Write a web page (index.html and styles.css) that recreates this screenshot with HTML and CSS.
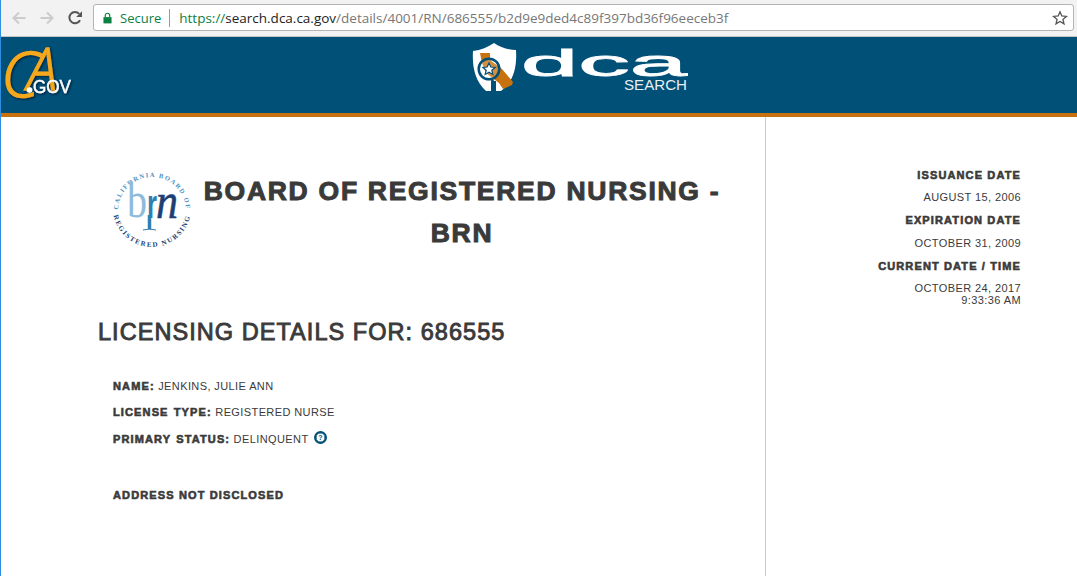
FILE: index.html
```html
<!DOCTYPE html>
<html lang="en">
<head>
<meta charset="utf-8">
<title>DCA Search</title>
<link rel="stylesheet" href="styles.css">
</head>
<body>
<div class="page">
  <div class="toolbar">
    <div class="nav">
      <svg class="nav-icon" viewBox="0 0 16 16"><path d="M14.5 8H2.500M8 2.500 2.500 8 8 13.500" fill="none" stroke="#ccc" stroke-width="2"/></svg>
      <svg class="nav-icon" viewBox="0 0 16 16"><path d="M1.500 8h12M8 2.500 13.500 8 8 13.500" fill="none" stroke="#ccc" stroke-width="2"/></svg>
      <svg class="nav-icon" viewBox="0 0 16 16"><path d="M13 10.200A5.600 5.600 0 1 1 12.200 3.900" fill="none" stroke="#555" stroke-width="2"/><path d="M9.200 7H15V1.200z" fill="#555"/></svg>
    </div>
    <div class="omnibox">
      <svg class="lock" viewBox="0 0 10 12"><path d="M0.500 5h9v7h-9z" fill="#0b8043"/><path d="M2.500 5V3.200a2.500 2.500 0 0 1 5 0V5" fill="none" stroke="#0b8043" stroke-width="1.300"/></svg>
      <span class="secure">Secure</span>
      <span class="url"><span class="scheme">https://</span><span class="host">search.dca.ca.gov</span>/details/4001/RN/686555/b2d9e9ded4c89f397bd36f96eeceb3f</span>
      <svg class="star" viewBox="0 0 16 16"><path d="M8 1.800 9.800 6l4.600.4-3.500 3 1.100 4.500L8 11.500l-4 2.400 1.100-4.500-3.500-3L6.200 6z" fill="none" stroke="#555" stroke-width="1.300"/></svg>
    </div>
  </div>

  <header class="banner">
    <svg class="ca-logo" viewBox="0 0 74 62">
      <defs>
        <filter id="ca-shadow" x="-10%" y="-10%" width="125%" height="125%"><feDropShadow dx="1" dy="1" stdDeviation="1" flood-color="#001020" flood-opacity=".8"/></filter>
      </defs>
      <g filter="url(#ca-shadow)">
        <text class="ca-script" x="-2" y="54" textLength="38" lengthAdjust="spacingAndGlyphs">C</text>
        <text class="ca-script ca-script-a" x="24" y="47" textLength="30" lengthAdjust="spacingAndGlyphs">A</text>
        <circle cx="26.500" cy="47" r="2.800" fill="#fff"/>
        <text class="ca-gov" x="30" y="50" textLength="38" lengthAdjust="spacingAndGlyphs">GOV</text>
      </g>
    </svg>
    <svg class="dca-logo" viewBox="0 0 216 52">
      <path d="M22 0C28 4 36 7 44 7 45 24 42 38 29 48H24V38H19V48H14C3 38 0 24 1 8 9 7 16 4 22 0Z" fill="#fff"/>
      <path d="M8 10H18V17L30 26 41 39 40 42 31 46 27 40 14 30 10 20Z" fill="#c8720f"/>
      <circle cx="17" cy="26" r="10.300" fill="#fff" fill-opacity=".2" stroke="#005078" stroke-width="2.500"/>
      <path d="M17 20l1.800 4 4.300.4-3.300 2.800 1 4.200-3.800-2.200-3.800 2.200 1-4.200-3.300-2.800 4.300-.4z" fill="#fff" stroke="#005078" stroke-width="1.200"/>
      <path d="M20.500 37v10" stroke="#005078" stroke-width="2.500"/>
      <text class="dca-word" x="49" y="33" textLength="166" lengthAdjust="spacingAndGlyphs">dca</text>
      <text class="dca-sub" x="152" y="47" textLength="63" lengthAdjust="spacingAndGlyphs">SEARCH</text>
    </svg>
  </header>

  <main class="content">
    <section class="primary">
      <div class="board">
        <svg class="brn-logo" viewBox="0 0 80 80">
          <defs>
            <path id="arc-top" d="M6 43A34 34 0 0 1 74 43"/>
            <path id="arc-bottom" d="M1 40A39 39 0 0 0 79 40"/>
          </defs>
          <text class="seal-top"><textPath href="#arc-top" startOffset="50%" text-anchor="middle">CALIFORNIA BOARD OF</textPath></text>
          <text class="seal-bottom"><textPath href="#arc-bottom" startOffset="50%" text-anchor="middle">REGISTERED NURSING</textPath></text>
          <text class="seal-b" x="15" y="49" textLength="20" lengthAdjust="spacingAndGlyphs">b</text>
          <text class="seal-r" x="35" y="50" textLength="10" lengthAdjust="spacingAndGlyphs">r</text>
          <text class="seal-n" x="44" y="50" textLength="22" lengthAdjust="spacingAndGlyphs">n</text>
          <path d="M37.500 47v14" stroke="#2f7fb2" stroke-width="3.500"/>
          <path d="M31 62q6-1.500 13 0" stroke="#3d7fae" stroke-width="1.200" fill="none"/>
        </svg>
        <h1 class="board-title">BOARD OF REGISTERED NURSING - BRN</h1>
      </div>

      <h2 class="details-title">LICENSING DETAILS FOR: 686555</h2>

      <div class="facts">
        <p class="fact"><b class="label">NAME:</b> JENKINS, JULIE ANN</p>
        <p class="fact"><b class="label">LICENSE TYPE:</b> REGISTERED NURSE</p>
        <p class="fact"><b class="label">PRIMARY STATUS:</b> DELINQUENT <span class="help">?</span></p>
        <p class="address"><b class="label">ADDRESS NOT DISCLOSED</b></p>
      </div>
    </section>

    <aside class="sidebar">
      <h3 class="label side-label">ISSUANCE DATE</h3>
      <p class="side-value">AUGUST 15, 2006</p>
      <h3 class="label side-label">EXPIRATION DATE</h3>
      <p class="side-value">OCTOBER 31, 2009</p>
      <h3 class="label side-label">CURRENT DATE / TIME</h3>
      <p class="side-value">OCTOBER 24, 2017<br>9:33:36 AM</p>
    </aside>
  </main>
</div>
</body>
</html>
```

FILE: styles.css
```css
* { box-sizing: border-box; }

html, body {
  margin: 0;
  height: 100%;
  overflow: hidden;
  background: #fff;
}

body {
  font-family: "Liberation Sans", Arial, sans-serif;
  color: #3a3a3a;
}

.page {
  height: 100vh;
  display: flex;
  flex-direction: column;
  border-left: 1px solid #2e8fe0;
}

.toolbar {
  height: 37px;
  flex: none;
  display: flex;
  align-items: center;
  gap: 10px;
  padding: 0 3px 1px 10px;
  background: #f2f2f2;
  border-bottom: 1px solid #c4c4c4;
}

.nav {
  display: flex;
  align-items: center;
  gap: 12px;
}

.nav-icon {
  width: 16px;
  height: 16px;
}

.omnibox {
  flex: 1;
  height: 27px;
  display: flex;
  align-items: center;
  padding: 0 5px 0 9px;
  background: #fff;
  border: 1px solid #b4b4b4;
  border-radius: 3px;
  font-family: "Open Sans", "Noto Sans", sans-serif;
  font-size: 13px;
}

.lock {
  width: 9px;
  height: 12px;
  margin-right: 8px;
}

.secure {
  color: #0b8043;
  padding-right: 8px;
  margin-right: 9px;
  border-right: 1px solid #999;
}

.url {
  flex: 1;
  font-size: 13.500px;
  color: #777;
  white-space: nowrap;
}

.scheme { color: #0b8043; }
.host { color: #222; }

.star {
  width: 16px;
  height: 16px;
}

.banner {
  height: 80px;
  flex: none;
  position: relative;
  display: flex;
  justify-content: center;
  padding-top: 6px;
  background: #005078;
  border-bottom: 4px solid #c8720f;
}

.ca-logo {
  position: absolute;
  left: 2px;
  top: 6px;
  width: 74px;
  height: 62px;
  overflow: visible;
}

.ca-script {
  font-family: "Open Sans", sans-serif;
  font-weight: 300;
  font-style: italic;
  font-size: 63px;
  fill: #f5a81c;
  stroke: #f5a81c;
  stroke-width: 1.500px;
}

.ca-script-a { font-size: 58px; }

.ca-gov {
  font-family: "Liberation Sans", sans-serif;
  font-size: 18px;
  fill: #fff;
  stroke: #fff;
  stroke-width: .4px;
}

.dca-logo {
  width: 216px;
  height: 52px;
  margin-left: 82px;
}

.dca-word {
  font-family: "Liberation Sans", sans-serif;
  font-size: 37px;
  fill: #fff;
  stroke: #fff;
  stroke-width: .8px;
}

.dca-sub {
  font-family: "Liberation Sans", sans-serif;
  font-size: 14px;
  fill: #e8eef2;
}

.content {
  flex: 1;
  display: flex;
  min-height: 0;
}

.primary {
  width: 765px;
  flex: none;
  padding: 51px 0 0 97px;
  border-right: 1px solid #b9cfe2;
}

.board {
  display: flex;
  align-items: flex-start;
  gap: 4px;
  padding-left: 14px;
}

.brn-logo {
  width: 80px;
  height: 80px;
  flex: none;
}

.board-title {
  width: 532px;
  margin: 2px 0 0;
  font-size: 26.500px;
  line-height: 42px;
  font-weight: 700;
  letter-spacing: 1.720px;
  text-align: center;
  -webkit-text-stroke: 1px #3a3a3a;
}

.seal-top, .seal-bottom {
  font-family: "Liberation Serif", serif;
  font-size: 6.500px;
  font-weight: 700;
}

.seal-top { fill: #4d8fbd; letter-spacing: 1.400px; }
.seal-bottom { fill: #1d3f73; font-size: 7px; letter-spacing: 1.500px; }

.seal-b, .seal-n {
  font-family: "Liberation Serif", serif;
}

.seal-b { fill: #8dbbdc; font-size: 50px; }
.seal-r { font-family: "Liberation Sans", sans-serif; fill: #2f7fb2; font-weight: 700; font-size: 40px; }
.seal-n { fill: #1d3f73; font-size: 50px; font-style: italic; stroke: #1d3f73; stroke-width: .6px; }

.details-title {
  margin: 63px 0 0;
  font-size: 23.500px;
  line-height: 30px;
  font-weight: 400;
  letter-spacing: 1.050px;
  -webkit-text-stroke: .9px #3a3a3a;
}

.facts {
  margin-top: 32px;
  padding-left: 15px;
}

.fact {
  margin: 0 0 11px;
  font-size: 11px;
  line-height: 15px;
  letter-spacing: .4px;
}

.label {
  font-weight: 700;
  font-size: 11px;
  letter-spacing: 1.130px;
  -webkit-text-stroke: .6px #3a3a3a;
}

.fact .label { word-spacing: 1px; }

.help {
  display: inline-block;
  width: 13px;
  height: 13px;
  margin-left: 2px;
  vertical-align: 3px;
  border: 2px solid #005078;
  border-radius: 50%;
  box-shadow: inset 0 0 0 .6px #005078;
  color: #005078;
  font-size: 7px;
  font-weight: 700;
  line-height: 9px;
  letter-spacing: 0;
  text-align: center;
}

.address {
  margin: 39px 0 0;
  line-height: 15px;
}

.sidebar {
  flex: 1;
  padding: 51px 56px 0 0;
  text-align: right;
}

.side-label {
  margin: 0;
  line-height: 15px;
}

.side-value {
  margin: 8.400px 0 10px;
  font-size: 11px;
  line-height: 12px;
  letter-spacing: .4px;
}
```
